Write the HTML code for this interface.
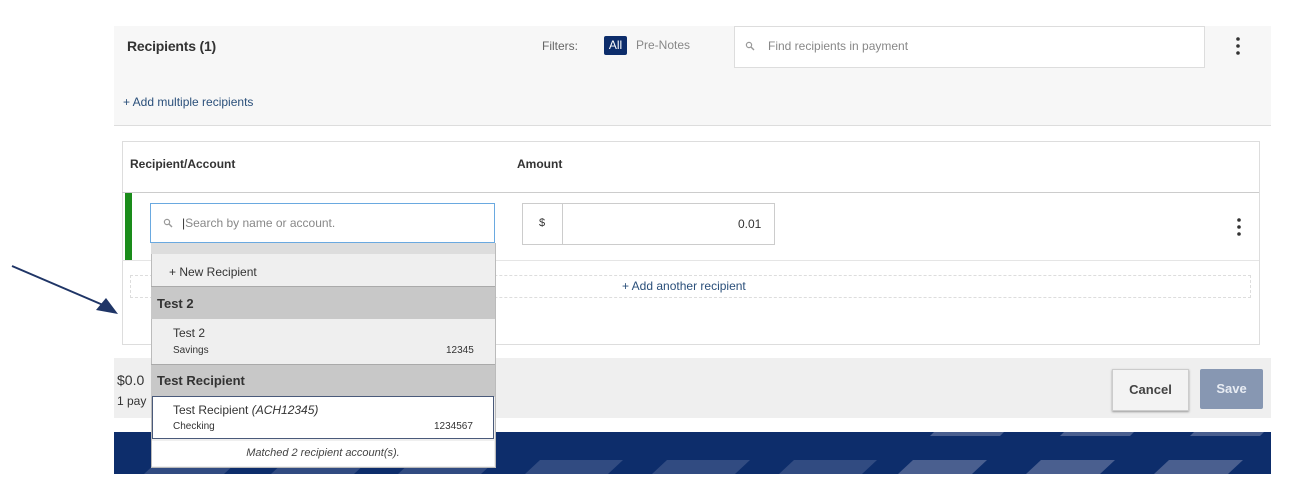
<!DOCTYPE html>
<html><head><style>
body{margin:0;width:1302px;height:492px;background:#fff;font-family:"Liberation Sans",sans-serif;position:relative;overflow:hidden;color:#333}
.a{position:absolute}
</style></head><body>
<div class="a" style="left:114px;top:26px;width:1157px;height:99px;background:#f7f7f7;border-bottom:1px solid #ddd"></div>
<div class="a" style="left:127px;top:38px;font-size:14px;font-weight:bold;color:#333;letter-spacing:-0.2px">Recipients (1)</div>
<div class="a" style="left:542px;top:39px;color:#666;font-size:12px">Filters:</div>
<div class="a" style="left:604px;top:36px;width:23px;height:19px;background:#0d2d6b;color:#fff;font-size:12px;line-height:19px;text-align:center;border-radius:2px">All</div>
<div class="a" style="left:636px;top:38px;color:#888;font-size:12px">Pre-Notes</div>
<div class="a" style="left:734px;top:26px;width:469px;height:40px;background:#fff;border:1px solid #ddd"></div>
<svg class="a" style="left:745px;top:41px" width="10" height="10"><circle cx="4" cy="4" r="2.6" fill="none" stroke="#999" stroke-width="1.2"/><line x1="6" y1="6" x2="9" y2="9" stroke="#999" stroke-width="1.4"/></svg>
<div class="a" style="left:768px;top:39px;color:#888;font-size:12px">Find recipients in payment</div>
<svg class="a" style="left:1235px;top:36px" width="6" height="20"><circle cx="3" cy="3" r="1.8" fill="#333"/><circle cx="3" cy="10" r="1.8" fill="#333"/><circle cx="3" cy="17" r="1.8" fill="#333"/></svg>
<div class="a" style="left:123px;top:95px;color:#2a4f7a;font-size:12px">+ Add multiple recipients</div>
<div class="a" style="left:122px;top:141px;width:1136px;height:202px;border:1px solid #ddd;background:#fff"></div>
<div class="a" style="left:122px;top:192px;width:1137px;height:1px;background:#ccc"></div>
<div class="a" style="left:130px;top:157px;font-size:12px;font-weight:bold">Recipient/Account</div>
<div class="a" style="left:517px;top:157px;font-size:12px;font-weight:bold">Amount</div>
<div class="a" style="left:125px;top:193px;width:7px;height:67px;background:#1a8c1a"></div>
<div class="a" style="left:122px;top:260px;width:1137px;height:1px;background:#e5e5e5"></div>
<div class="a" style="left:522px;top:203px;width:251px;height:40px;border:1px solid #ccc;background:#fff"></div>
<div class="a" style="left:562px;top:204px;width:1px;height:40px;background:#ccc"></div>
<div class="a" style="left:539px;top:217px;font-size:11px">$</div>
<div class="a" style="left:738px;top:217px;font-size:12px">0.01</div>
<svg class="a" style="left:1236px;top:217px" width="6" height="20"><circle cx="3" cy="3" r="1.8" fill="#333"/><circle cx="3" cy="10" r="1.8" fill="#333"/><circle cx="3" cy="17" r="1.8" fill="#333"/></svg>
<div class="a" style="left:130px;top:275px;width:1119px;height:21px;border:1px dashed #ddd"></div>
<div class="a" style="left:622px;top:279px;font-size:12px;color:#2a4f7a">+ Add another recipient</div>
<div class="a" style="left:114px;top:358px;width:1157px;height:60px;background:#efefef"></div>
<div class="a" style="left:117px;top:372px;font-size:14px">$0.0</div>
<div class="a" style="left:117px;top:394px;font-size:12px">1 pay</div>
<div class="a" style="left:1112px;top:369px;width:75px;height:40px;border:1px solid #ccc;background:#f3f3f3;box-shadow:0 1px 2px #999;font-size:13px;font-weight:bold;color:#444;text-align:center;line-height:40px">Cancel</div>
<div class="a" style="left:1200px;top:369px;width:63px;height:40px;background:#8797b2;color:#e8ecf3;font-size:13px;font-weight:bold;text-align:center;line-height:40px;border-radius:2px">Save</div>
<div class="a" style="left:114px;top:432px;width:1157px;height:42px;background:#0d2d6b;overflow:hidden">
<svg width="1157" height="42"><g fill="#4a5f8f">
<polygon points="30,42 110,42 125,28 45,28" opacity=".6"/>
<polygon points="157,42 240,42 255,28 172,28" opacity=".6"/>
<polygon points="284,42 367,42 382,28 299,28" opacity=".6"/>
<polygon points="411,42 494,42 509,28 426,28" opacity=".6"/>
<polygon points="538,42 621,42 636,28 553,28" opacity=".6"/>
<polygon points="665,42 748,42 763,28 680,28" opacity=".6"/>
<polygon points="784,42 858,42 873,28 799,28"/>
<polygon points="912,42 986,42 1001,28 927,28"/>
<polygon points="1040,42 1114,42 1129,28 1055,28"/>
<polygon points="820,0 890,0 886,4 816,4"/>
<polygon points="950,0 1020,0 1016,4 946,4"/>
<polygon points="1080,0 1150,0 1146,4 1076,4"/>
</g></svg></div>
<svg class="a" style="left:0;top:260px" width="130" height="60"><line x1="12" y1="6" x2="110" y2="48" stroke="#1f3566" stroke-width="2"/><polygon points="118,54 96,50 106,38" fill="#1f3566"/></svg>
<div class="a" style="left:150px;top:203px;width:343px;height:38px;border:1px solid #6aa9e0;background:#fff"></div>
<svg class="a" style="left:163px;top:218px" width="10" height="10"><circle cx="4" cy="4" r="2.6" fill="none" stroke="#999" stroke-width="1.2"/><line x1="6" y1="6" x2="9" y2="9" stroke="#999" stroke-width="1.4"/></svg>
<div class="a" style="left:182px;top:216px;color:#888;font-size:12px"><span style="color:#333">|</span>Search by name or account.</div>
<div class="a" style="left:151px;top:243px;width:343px;height:224px;background:#efefef;border:1px solid #bbb;border-top:0"></div>
<div class="a" style="left:151px;top:243px;width:344px;height:11px;background:#ddd"></div>
<div class="a" style="left:169px;top:265px;font-size:12px">+ New Recipient</div>
<div class="a" style="left:151px;top:286px;width:344px;height:32px;background:#c8c8c8;border-top:1px solid #aaa"></div>
<div class="a" style="left:157px;top:296px;font-size:13px;font-weight:bold">Test 2</div>
<div class="a" style="left:173px;top:326px;font-size:12px">Test 2</div>
<div class="a" style="left:173px;top:345px;font-size:10px">Savings</div>
<div class="a" style="left:446px;top:345px;font-size:10px">12345</div>
<div class="a" style="left:151px;top:364px;width:344px;height:32px;background:#c8c8c8;border-top:1px solid #aaa"></div>
<div class="a" style="left:157px;top:373px;font-size:13px;font-weight:bold">Test Recipient</div>
<div class="a" style="left:152px;top:396px;width:342px;height:43px;background:#fff;border:1px solid #4a5a7a;box-sizing:border-box"></div>
<div class="a" style="left:173px;top:403px;font-size:12px">Test Recipient <i>(ACH12345)</i></div>
<div class="a" style="left:173px;top:421px;font-size:10px">Checking</div>
<div class="a" style="left:434px;top:421px;font-size:10px">1234567</div>
<div class="a" style="left:152px;top:441px;width:342px;height:25px;background:#fff"></div>
<div class="a" style="left:152px;top:447px;width:342px;text-align:center;font-size:11px;font-style:italic;color:#444">Matched 2 recipient account(s).</div>
</body></html>
